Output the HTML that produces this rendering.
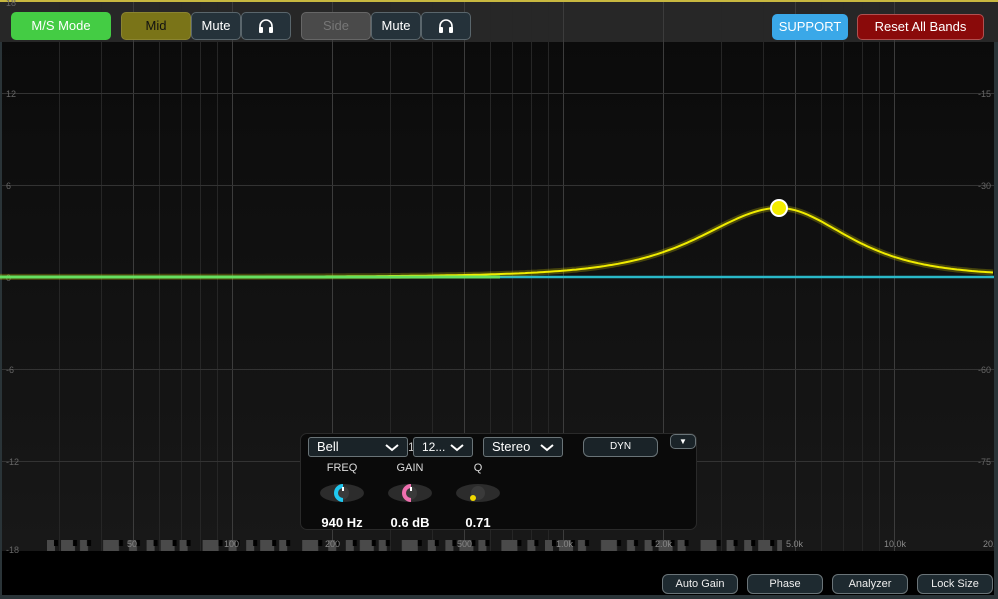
<!DOCTYPE html>
<html><head><meta charset="utf-8"><style>
*{margin:0;padding:0;box-sizing:border-box}
body{width:998px;height:599px;overflow:hidden;background:#000;font-family:"Liberation Sans",sans-serif;position:relative}
.abs{position:absolute}
.btn{position:absolute;border-radius:5px;font-size:13px;text-align:center;line-height:26px;height:28px}
.dk{background:#25323a;border:1px solid #5a666c;color:#fff}
.bb{position:absolute;top:574px;height:20px;border:1px solid #6a7478;background:#1e2a30;border-radius:6px;color:#eee;font-size:11px;line-height:18px;text-align:center}
.dd{position:absolute;top:437px;height:20px;border:1px solid #6a7478;background:#1a2328;border-radius:3px;color:#fff;font-size:13px;line-height:18px;padding-left:8px}
.dd svg{position:absolute;right:8px;top:6px}
.kl{position:absolute;top:462px;font-size:11px;color:#ddd;width:60px;text-align:center}
.kv{position:absolute;top:515px;font-size:13px;font-weight:bold;color:#fff;width:70px;text-align:center}
</style></head><body>
<svg class="abs" style="left:0;top:0" width="998" height="599">
<defs><linearGradient id="bg" x1="0" y1="0" x2="0" y2="1"><stop offset="0" stop-color="#0a0a0a"/><stop offset="1" stop-color="#181818"/></linearGradient>
<pattern id="pk" x="47" y="540" width="99.6" height="11" patternUnits="userSpaceOnUse">
<rect x="0" y="0" width="8" height="11" fill="#4a4a4a"/><rect x="7" y="0" width="4" height="6" fill="#000"/>
<rect x="14" y="0" width="14" height="11" fill="#4a4a4a"/><rect x="26" y="0" width="4" height="6" fill="#000"/>
<rect x="33" y="0" width="8" height="11" fill="#4a4a4a"/><rect x="40" y="0" width="4" height="6" fill="#000"/>
<rect x="56" y="0" width="16" height="11" fill="#4a4a4a"/><rect x="72" y="0" width="4" height="6" fill="#000"/>
<rect x="82" y="0" width="8" height="11" fill="#4a4a4a"/><rect x="89" y="0" width="4" height="6" fill="#000"/>
</pattern></defs>
<rect x="0" y="0" width="998" height="551" fill="url(#bg)"/>
<rect x="0" y="0" width="998" height="42" fill="#272727"/>
<rect x="0" y="0" width="998" height="2" fill="#c8b840"/>
<g id="grid" stroke-width="1"></g>
<g stroke="#333"><line x1="0" y1="93.5" x2="998" y2="93.5"/><line x1="0" y1="185.5" x2="998" y2="185.5"/><line x1="0" y1="369.5" x2="998" y2="369.5"/><line x1="0" y1="461.5" x2="998" y2="461.5"/></g>
<g fill="#666" font-size="9" font-family="Liberation Sans"><text x="6" y="97">12</text><text x="6" y="189">6</text><text x="6" y="281">0</text><text x="6" y="373">-6</text><text x="6" y="465">-12</text><text x="6" y="553">-18</text><text x="6" y="6">18</text>
<text x="978" y="97">-15</text><text x="978" y="189">-30</text><text x="978" y="373">-60</text><text x="978" y="465">-75</text></g>
<rect x="47" y="540" width="735" height="11" fill="url(#pk)"/>
<g fill="#888" font-size="9" font-family="Liberation Sans"><text x="127" y="547">50</text><text x="224" y="547">100</text><text x="325" y="547">200</text><text x="457" y="547">500</text><text x="556" y="547">1.0k</text><text x="655" y="547">2.0k</text><text x="786" y="547">5.0k</text><text x="884" y="547">10.0k</text><text x="983" y="547">20.</text></g>
<rect x="0" y="595" width="998" height="4" fill="#2a3438"/>
<rect x="0" y="42" width="2" height="557" fill="#2a3438"/><rect x="994" y="42" width="4" height="557" fill="#2a3438"/>
<line x1="0" y1="277" x2="994" y2="277" stroke="#2ab8c8" stroke-width="2.5"/>
<path id="cv" fill="none" stroke="#e8e000" stroke-width="6" stroke-opacity="0.25"/>
<path id="cv2" fill="none" stroke="#f0ec00" stroke-width="2"/>
<line x1="0" y1="277" x2="500" y2="277" stroke="#66e060" stroke-width="3"/>
<circle cx="779" cy="208" r="8" fill="#f4ec00" stroke="#fff" stroke-width="2"/>
</svg>
<script>
var g=document.getElementById('grid'),s='';
var fs=[30,40,50,60,70,80,90,100,200,300,400,500,600,700,800,900,1000,2000,3000,4000,5000,6000,7000,8000,9000,10000];
fs.forEach(function(f){var x=Math.round(1+331*Math.log10(f/20))+0.5;var m=(f==100||f==1000||f==10000||f==200||f==2000||f==500||f==5000||f==50);s+='<line x1="'+x+'" y1="2" x2="'+x+'" y2="551" stroke="'+(m?'#3c3c3c':'#262626')+'"/>';});
g.innerHTML=s;
var d='';for(var x=0;x<=994;x+=3){var dx=(x-779)/(x>779?125:142);var u=dx*dx;var h=69/((1+u)*(1+u));var y=277-h;d+=(x?'L':'M')+x+' '+y.toFixed(1);}
document.getElementById('cv').setAttribute('d',d);document.getElementById('cv2').setAttribute('d',d);
</script>
<div class="btn" style="left:11px;top:12px;width:100px;background:#44cc44;color:#fff;font-size:13px;line-height:28px">M/S Mode</div>
<div class="btn" style="left:121px;top:12px;width:70px;background:#7a7418;border:1px solid #8a8430;color:#111">Mid</div>
<div class="btn dk" style="left:191px;top:12px;width:50px">Mute</div>
<div class="btn dk" style="left:241px;top:12px;width:50px"><svg width="18" height="18" viewBox="0 0 18 18" style="margin-top:4px"><path d="M3 12 V9 A6 6 0 0 1 15 9 V12" fill="none" stroke="#fff" stroke-width="1.6"/><rect x="2" y="10" width="4" height="6" rx="1" fill="#fff"/><rect x="12" y="10" width="4" height="6" rx="1" fill="#fff"/></svg></div>
<div class="btn" style="left:301px;top:12px;width:70px;background:#4a4a4a;border:1px solid #666;color:#777">Side</div>
<div class="btn dk" style="left:371px;top:12px;width:50px">Mute</div>
<div class="btn dk" style="left:421px;top:12px;width:50px"><svg width="18" height="18" viewBox="0 0 18 18" style="margin-top:4px"><path d="M3 12 V9 A6 6 0 0 1 15 9 V12" fill="none" stroke="#fff" stroke-width="1.6"/><rect x="2" y="10" width="4" height="6" rx="1" fill="#fff"/><rect x="12" y="10" width="4" height="6" rx="1" fill="#fff"/></svg></div>
<div class="btn" style="left:772px;top:14px;width:76px;height:26px;line-height:26px;background:#3aa8e8;color:#fff">SUPPORT</div>
<div class="btn" style="left:857px;top:14px;width:127px;height:26px;line-height:24px;background:#8a0a0a;border:1px solid #b05050;color:#fff">Reset All Bands</div>

<div class="abs" style="left:300px;top:433px;width:397px;height:97px;background:#0a0a0a;border:1px solid #2a2a2a;border-radius:7px"></div>
<div class="dd" style="left:308px;width:100px">Bell<svg width="14" height="8"><path d="M1 1 L7 6 L13 1" fill="none" stroke="#fff" stroke-width="2"/></svg></div>
<div class="abs" style="left:408px;top:440px;color:#ccc;font-size:12px">1</div>
<div class="dd" style="left:413px;width:60px;font-size:12px">12...<svg width="14" height="8"><path d="M1 1 L7 6 L13 1" fill="none" stroke="#fff" stroke-width="2"/></svg></div>
<div class="dd" style="left:483px;width:80px">Stereo<svg width="14" height="8"><path d="M1 1 L7 6 L13 1" fill="none" stroke="#fff" stroke-width="2"/></svg></div>
<div class="dd" style="left:583px;width:75px;border-radius:6px;padding:0;text-align:center;font-size:10px">DYN</div>
<div class="dd" style="left:670px;top:434px;width:26px;height:15px;border-radius:5px;padding:0;text-align:center;font-size:8px;line-height:13px">▼</div>
<div class="kl" style="left:312px">FREQ</div><div class="kl" style="left:380px">GAIN</div><div class="kl" style="left:448px">Q</div>
<svg class="abs" style="left:318px;top:482px" width="200" height="22">
<ellipse cx="24" cy="11" rx="22" ry="9" fill="#2c2c2c"/><circle cx="24" cy="11" r="7" fill="#3a3a3a"/><path d="M25 4 A7 7 0 0 0 25 18" fill="none" stroke="#20c8f0" stroke-width="4"/><line x1="25" y1="5" x2="25" y2="9" stroke="#fff" stroke-width="2"/>
<ellipse cx="92" cy="11" rx="22" ry="9" fill="#2c2c2c"/><circle cx="92" cy="11" r="7" fill="#3a3a3a"/><path d="M93 4 A7 7 0 0 0 93 18" fill="none" stroke="#f070b0" stroke-width="4"/><line x1="93" y1="5" x2="93" y2="9" stroke="#fff" stroke-width="2"/>
<ellipse cx="160" cy="11" rx="22" ry="9" fill="#2c2c2c"/><circle cx="160" cy="11" r="7" fill="#3a3a3a"/><circle cx="155" cy="16" r="3" fill="#f0d800"/>
</svg>
<div class="kv" style="left:307px">940 Hz</div><div class="kv" style="left:375px">0.6 dB</div><div class="kv" style="left:443px">0.71</div>
<div class="bb" style="left:662px;width:76px">Auto Gain</div>
<div class="bb" style="left:747px;width:76px">Phase</div>
<div class="bb" style="left:832px;width:76px">Analyzer</div>
<div class="bb" style="left:917px;width:76px">Lock Size</div>
</body></html>
